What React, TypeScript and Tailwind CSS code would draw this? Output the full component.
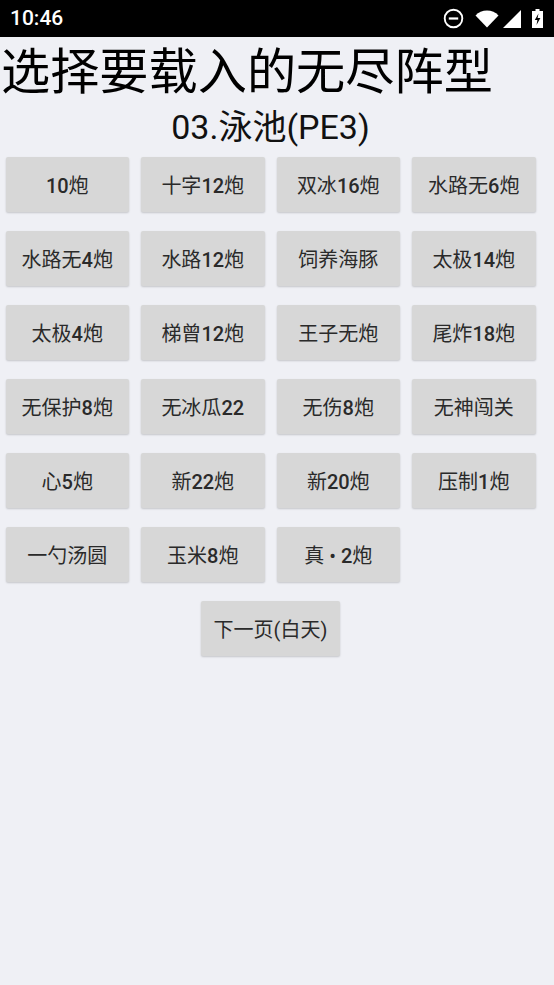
const rows = [
  ['10炮', '十字12炮', '双冰16炮', '水路无6炮'],
  ['水路无4炮', '水路12炮', '饲养海豚', '太极14炮'],
  ['太极4炮', '梯曾12炮', '王子无炮', '尾炸18炮'],
  ['无保护8炮', '无冰瓜22', '无伤8炮', '无神闯关'],
  ['心5炮', '新22炮', '新20炮', '压制1炮'],
  ['一勺汤圆', '玉米8炮', '真 • 2炮'],
];

const btn =
  'h-[55px] flex items-center justify-center pt-[2px] rounded-[2px] bg-[#d7d7d7] text-[20px] text-[#2a2a2a] shadow-[0_1px_2px_rgba(0,0,0,0.18)]';

// digits render heavier than the CJK glyphs on the device
function Label({ text }: { text: string }) {
  return (
    <span>
      {text.split(/(\d+)/).map((part, i) =>
        /\d/.test(part) ? <span key={i} className="font-medium">{part}</span> : part
      )}
    </span>
  );
}

export default function App() {
  return (
    <div className="w-[554px] h-[985px] bg-[#eff0f5] overflow-hidden font-['Roboto','Noto_Sans_CJK_SC',sans-serif]">
      <div className="h-[37px] bg-black flex items-center justify-between pl-[10px] pr-[11px] text-white">
        <span className="text-[21px] font-medium">10:46</span>
        <div className="flex items-center gap-[9px]">
          <svg width="21" height="21" viewBox="0 0 21 21" fill="none" stroke="white">
            <circle cx="10.5" cy="10.5" r="8.8" strokeWidth="1.9" />
            <path d="M5.8 10.5h9.4" strokeWidth="2.2" />
          </svg>
          <svg width="24" height="18" viewBox="0 0 24 18" fill="white" className="ml-[2px]">
            <path d="M0.5 5.5C3.5 2.3 7.5 0.5 12 0.5s8.5 1.8 11.5 5L12 17.5z" />
          </svg>
          <svg width="18" height="18" viewBox="0 0 18 18" fill="white" className="-ml-[5px]">
            <path d="M0 18L18 0v18z" />
          </svg>
          <svg width="11" height="19" viewBox="0 0 11 19" className="ml-[2px]">
            <path fillRule="evenodd" fill="white" d="M3.5 0h4v2H11v17H0V2h3.5zM6.5 4.5L2.8 11h2.6l-.9 5 3.9-7H5.6z" />
          </svg>
        </div>
      </div>
      <h1 className="text-[49.2px] leading-[66px] text-black pt-[2px] ml-[1px] whitespace-nowrap">选择要载入的无尽阵型</h1>
      <h2 className="text-[34px] leading-[44px] text-[#111] text-center mr-[13px]">03.泳池(PE3)</h2>
      <div className="mt-[8px] pl-[5.5px] pr-[18.5px] flex flex-col gap-[19px]">
        {rows.map((row, i) => (
          <div key={i} className="grid grid-cols-[repeat(4,123.5px)] gap-x-[12px]">
            {row.map((label) => (
              <button key={label} className={btn}><Label text={label} /></button>
            ))}
          </div>
        ))}
        <div className="flex justify-center">
          <button className={btn + ' w-[139px]'}>下一页(白天)</button>
        </div>
      </div>
    </div>
  );
}
